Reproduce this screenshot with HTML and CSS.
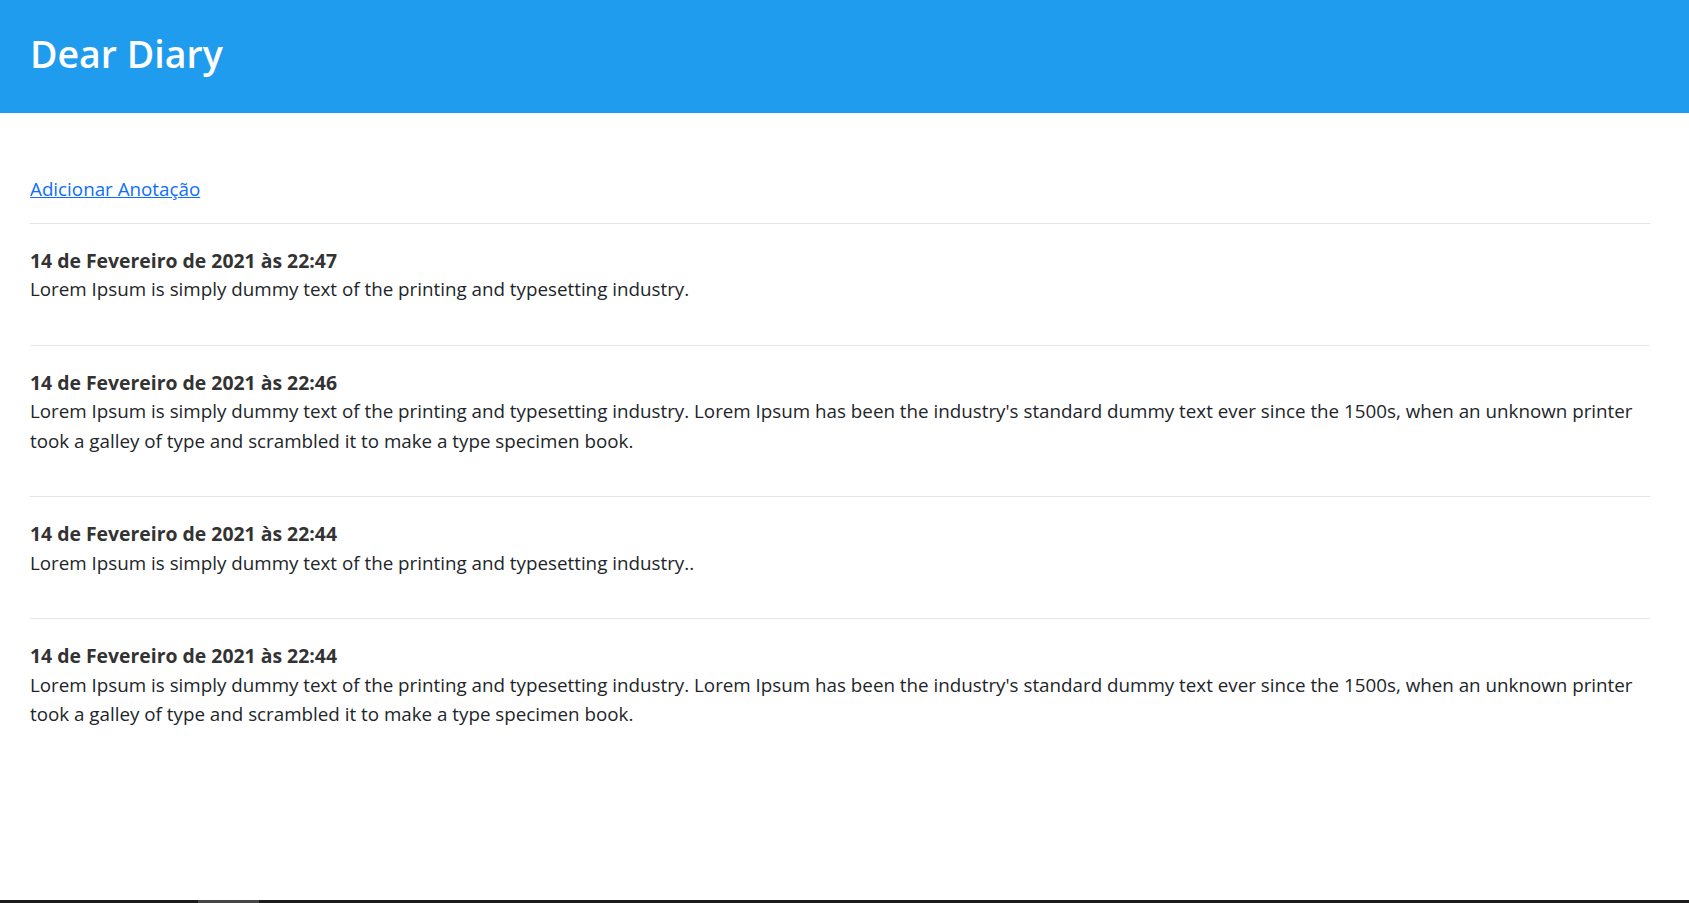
FILE: index.html
```html
<!DOCTYPE html>
<html lang="pt-BR">
<head>
<meta charset="utf-8">
<title>Dear Diary</title>
<link rel="stylesheet" href="styles.css">
</head>
<body>
<header class="topbar">
  <h1 class="brand">Dear Diary</h1>
</header>
<main class="content">
  <a class="add-link" href="#">Adicionar Anotação</a>
  <div class="entries">
    <article class="entry">
      <div class="entry-date">14 de Fevereiro de 2021 às 22:47</div>
      <div class="entry-text">Lorem Ipsum is simply dummy text of the printing and typesetting industry.</div>
    </article>
    <article class="entry">
      <div class="entry-date">14 de Fevereiro de 2021 às 22:46</div>
      <div class="entry-text">Lorem Ipsum is simply dummy text of the printing and typesetting industry. Lorem Ipsum has been the industry's standard dummy text ever since the 1500s, when an unknown printer took a galley of type and scrambled it to make a type specimen book.</div>
    </article>
    <article class="entry">
      <div class="entry-date">14 de Fevereiro de 2021 às 22:44</div>
      <div class="entry-text">Lorem Ipsum is simply dummy text of the printing and typesetting industry..</div>
    </article>
    <article class="entry">
      <div class="entry-date">14 de Fevereiro de 2021 às 22:44</div>
      <div class="entry-text">Lorem Ipsum is simply dummy text of the printing and typesetting industry. Lorem Ipsum has been the industry's standard dummy text ever since the 1500s, when an unknown printer took a galley of type and scrambled it to make a type specimen book.</div>
    </article>
  </div>
</main>
<div class="bottom-bar"><div class="bottom-thumb"></div></div>
</body>
</html>
```
FILE: styles.css
```css
html, body {
  margin: 0;
  padding: 0;
  background: #ffffff;
}
body {
  font-family: "Open Sans", "Noto Sans", sans-serif;
  color: #212529;
}
.topbar {
  box-sizing: border-box;
  height: 113px;
  background: #209cee;
  padding: 30px 30px 0 30px;
}
.brand {
  margin: 0;
  font-size: 37.5px;
  line-height: 48px;
  font-weight: 600;
  color: #ffffff;
}
.content {
  padding: 62px 39px 0 30px;
  font-size: 18.8px;
  line-height: 29.5px;
}
.add-link {
  display: block;
  width: max-content;
  color: #0d6efd;
  text-decoration: underline;
  margin-bottom: 18px;
}
.entry {
  border-top: 1px solid #e6e6e6;
  padding: 22px 0 40px 0;
}
.entry-date {
  font-weight: 700;
  font-size: 19.4px;
  color: #333333;
}
.entry-text {
  color: #212529;
}
.bottom-bar {
  position: fixed;
  left: 0;
  right: 0;
  bottom: 0;
  height: 3px;
  background: #1b1b1b;
}
.bottom-thumb {
  position: absolute;
  left: 198px;
  width: 61px;
  top: 0;
  bottom: 0;
  background: #474747;
}
```
